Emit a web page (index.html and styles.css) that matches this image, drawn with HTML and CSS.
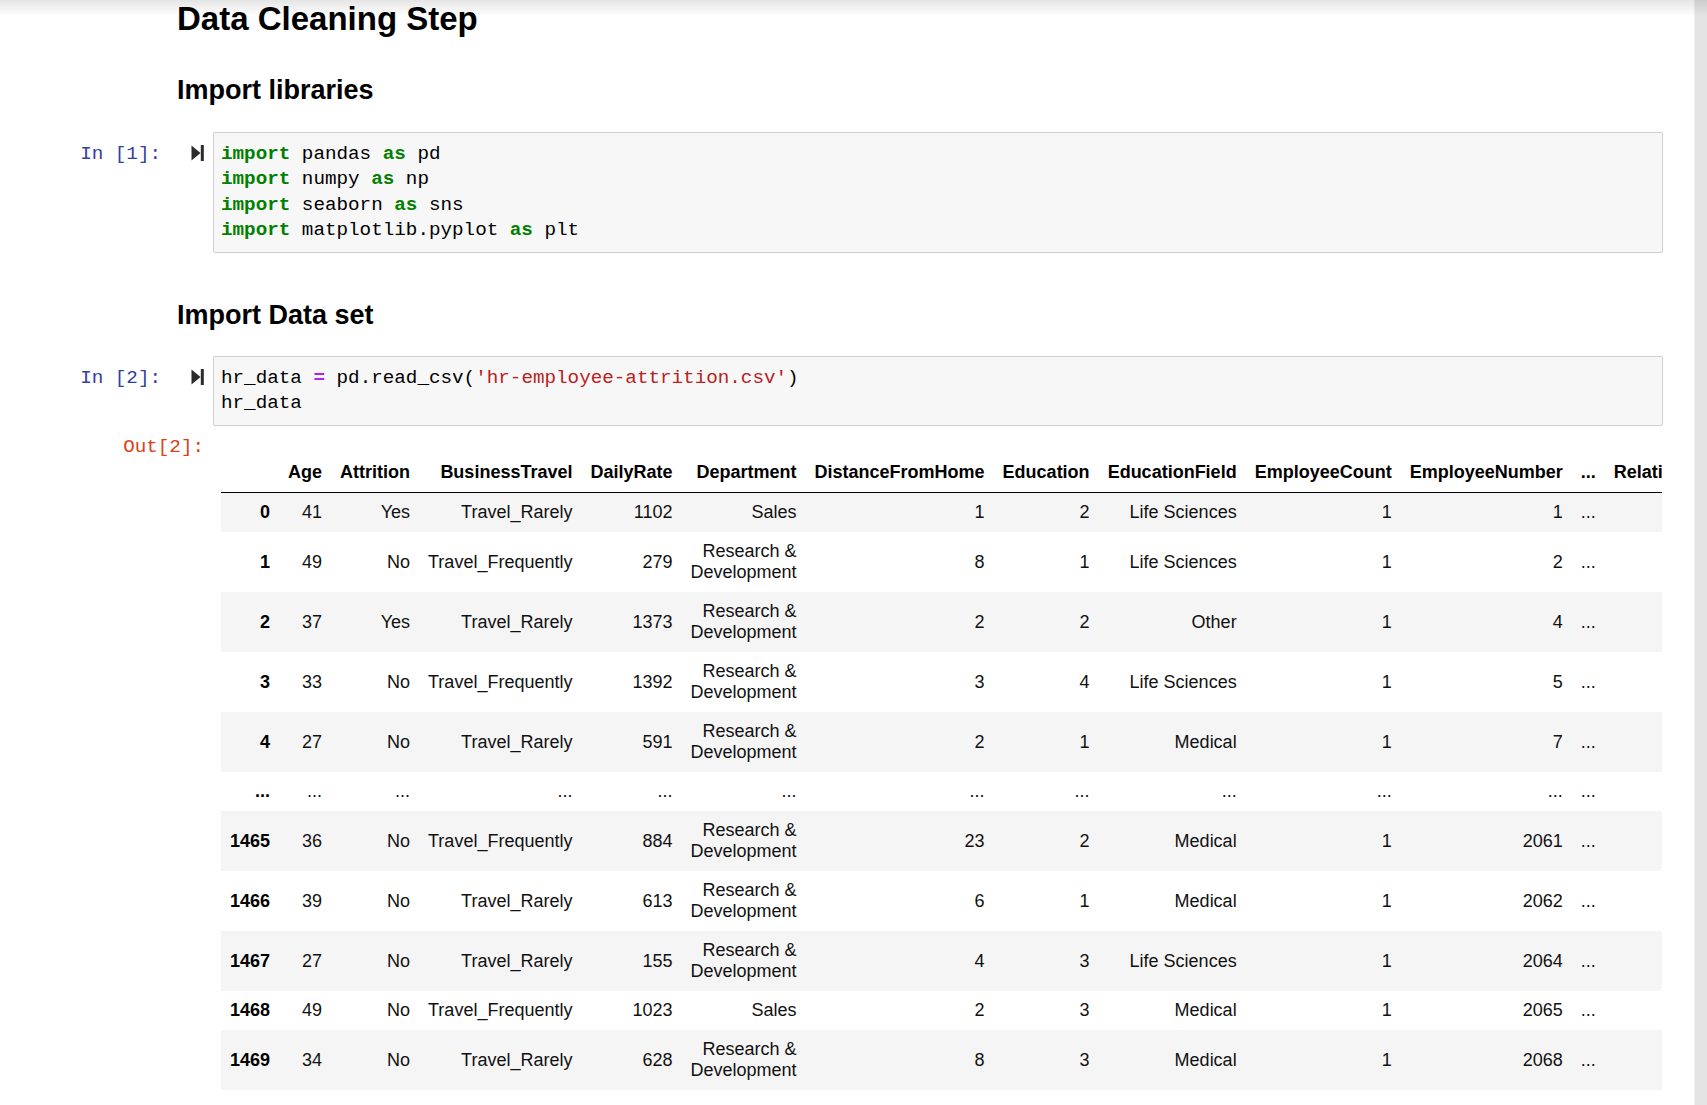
FILE: index.html
```html
<!DOCTYPE html>
<html>
<head>
<meta charset="utf-8">
<link rel="stylesheet" href="styles.css">
</head>
<body>
<div class="page">
  <div class="notebook">
    <h2 class="h-main">Data Cleaning Step</h2>
    <h3 class="h-sub first">Import libraries</h3>

    <div class="cell cell1">
      <div class="prompt in-prompt">
        <span class="prompt-text">In [1]:</span>
        <svg class="run-icon" width="13" height="16" viewBox="0 0 13 16"><path d="M0.5 0.5 L9.5 8 L0.5 15.5 Z" fill="#2b2b2b"/><rect x="9.8" y="0" width="3" height="16" fill="#2b2b2b"/></svg>
      </div>
      <div class="input-box">
        <div class="code">
          <div class="line"><span class="kw">import</span> pandas <span class="kw">as</span> pd</div>
          <div class="line"><span class="kw">import</span> numpy <span class="kw">as</span> np</div>
          <div class="line"><span class="kw">import</span> seaborn <span class="kw">as</span> sns</div>
          <div class="line"><span class="kw">import</span> matplotlib.pyplot <span class="kw">as</span> plt</div>
        </div>
      </div>
    </div>

    <h3 class="h-sub second">Import Data set</h3>

    <div class="cell cell2">
      <div class="prompt in-prompt">
        <span class="prompt-text">In [2]:</span>
        <svg class="run-icon" width="13" height="16" viewBox="0 0 13 16"><path d="M0.5 0.5 L9.5 8 L0.5 15.5 Z" fill="#2b2b2b"/><rect x="9.8" y="0" width="3" height="16" fill="#2b2b2b"/></svg>
      </div>
      <div class="input-box">
        <div class="code">
          <div class="line">hr_data <span class="op">=</span> pd.read_csv(<span class="str">'hr-employee-attrition.csv'</span>)</div>
          <div class="line">hr_data</div>
        </div>
      </div>
    </div>

    <div class="cell output">
      <div class="prompt out-prompt"><span class="prompt-text">Out[2]:</span></div>
      <div class="output-area">
        <table class="dataframe">
          <thead>
            <tr><th></th><th>Age</th><th>Attrition</th><th>BusinessTravel</th><th>DailyRate</th><th>Department</th><th>DistanceFromHome</th><th>Education</th><th>EducationField</th><th>EmployeeCount</th><th>EmployeeNumber</th><th>...</th><th>RelationshipSatisfaction</th><th>StandardHours</th><th>StockOptionLevel</th></tr>
          </thead>
          <tbody>
            <tr><th>0</th><td>41</td><td>Yes</td><td>Travel_Rarely</td><td>1102</td><td>Sales</td><td>1</td><td>2</td><td>Life Sciences</td><td>1</td><td>1</td><td>...</td><td>1</td><td>80</td><td>0</td></tr>
            <tr><th>1</th><td>49</td><td>No</td><td>Travel_Frequently</td><td>279</td><td>Research &amp; Development</td><td>8</td><td>1</td><td>Life Sciences</td><td>1</td><td>2</td><td>...</td><td>4</td><td>80</td><td>1</td></tr>
            <tr><th>2</th><td>37</td><td>Yes</td><td>Travel_Rarely</td><td>1373</td><td>Research &amp; Development</td><td>2</td><td>2</td><td>Other</td><td>1</td><td>4</td><td>...</td><td>2</td><td>80</td><td>0</td></tr>
            <tr><th>3</th><td>33</td><td>No</td><td>Travel_Frequently</td><td>1392</td><td>Research &amp; Development</td><td>3</td><td>4</td><td>Life Sciences</td><td>1</td><td>5</td><td>...</td><td>3</td><td>80</td><td>0</td></tr>
            <tr><th>4</th><td>27</td><td>No</td><td>Travel_Rarely</td><td>591</td><td>Research &amp; Development</td><td>2</td><td>1</td><td>Medical</td><td>1</td><td>7</td><td>...</td><td>4</td><td>80</td><td>1</td></tr>
            <tr><th>...</th><td>...</td><td>...</td><td>...</td><td>...</td><td>...</td><td>...</td><td>...</td><td>...</td><td>...</td><td>...</td><td>...</td><td>...</td><td>...</td><td>...</td></tr>
            <tr><th>1465</th><td>36</td><td>No</td><td>Travel_Frequently</td><td>884</td><td>Research &amp; Development</td><td>23</td><td>2</td><td>Medical</td><td>1</td><td>2061</td><td>...</td><td>3</td><td>80</td><td>1</td></tr>
            <tr><th>1466</th><td>39</td><td>No</td><td>Travel_Rarely</td><td>613</td><td>Research &amp; Development</td><td>6</td><td>1</td><td>Medical</td><td>1</td><td>2062</td><td>...</td><td>1</td><td>80</td><td>1</td></tr>
            <tr><th>1467</th><td>27</td><td>No</td><td>Travel_Rarely</td><td>155</td><td>Research &amp; Development</td><td>4</td><td>3</td><td>Life Sciences</td><td>1</td><td>2064</td><td>...</td><td>2</td><td>80</td><td>1</td></tr>
            <tr><th>1468</th><td>49</td><td>No</td><td>Travel_Frequently</td><td>1023</td><td>Sales</td><td>2</td><td>3</td><td>Medical</td><td>1</td><td>2065</td><td>...</td><td>4</td><td>80</td><td>0</td></tr>
            <tr><th>1469</th><td>34</td><td>No</td><td>Travel_Rarely</td><td>628</td><td>Research &amp; Development</td><td>8</td><td>3</td><td>Medical</td><td>1</td><td>2068</td><td>...</td><td>1</td><td>80</td><td>0</td></tr>
          </tbody>
        </table>
      </div>
    </div>
  </div>
  <div class="scrollbar"></div>
</div>
<div class="topshade"></div>
</body>
</html>
```

FILE: styles.css
```css
html, body {
  margin: 0;
  padding: 0;
  background: #fff;
  overflow: hidden;
}

body {
  font-family: "Liberation Sans", Arial, sans-serif;
  color: #000;
  width: 1707px;
  height: 1105px;
}

.page {
  display: flex;
  height: 1105px;
}

.notebook {
  width: 1694px;
  flex: none;
  height: 1105px;
  overflow: hidden;
  padding-top: 1px;
  box-sizing: border-box;
}

.scrollbar {
  flex: 1;
  background: #e4e4e4;
  border-left: 1px solid #eeeeee;
}

.topshade {
  position: fixed;
  left: 0;
  top: 0;
  width: 1707px;
  height: 16px;
  background: linear-gradient(to bottom, rgba(0,0,0,0.10), rgba(0,0,0,0));
  pointer-events: none;
}

.h-main {
  margin: 0 0 0 177px;
  font-size: 33px;
  line-height: 36px;
  font-weight: bold;
}

.h-sub {
  margin: 0 0 0 177px;
  font-size: 27px;
  line-height: 31px;
  font-weight: bold;
}

.h-sub.first {
  margin-top: 38px;
}

.h-sub.second {
  margin-top: 46.7px;
}

.cell {
  display: flex;
  align-items: flex-start;
}

.cell1 {
  margin-top: 26.4px;
}

.cell2 {
  margin-top: 25.5px;
}

.prompt {
  width: 213px;
  flex: none;
  box-sizing: border-box;
  display: flex;
  justify-content: flex-end;
  align-items: flex-start;
  font-family: "Liberation Mono", "DejaVu Sans Mono", monospace;
  font-size: 19.25px;
  line-height: 25.5px;
}

.in-prompt {
  padding-top: 9.4px;
  padding-right: 9px;
  color: #303F9F;
}

.in-prompt .prompt-text {
  margin-right: 30px;
}

.run-icon {
  margin-top: 3.5px;
  display: block;
}

.out-prompt {
  padding-top: 8.6px;
  padding-right: 9px;
  color: #D84315;
}

.input-box {
  width: 1450px;
  flex: none;
  box-sizing: border-box;
  background: #f7f7f7;
  border: 1px solid #cfcfcf;
  border-radius: 2px;
  padding: 8.4px 0;
}

.code {
  padding: 0 7px;
  font-family: "Liberation Mono", "DejaVu Sans Mono", monospace;
  font-size: 19.25px;
  line-height: 25.5px;
  color: #000;
}

.line {
  white-space: pre;
  height: 25.5px;
}

.kw {
  color: #008000;
  font-weight: bold;
}

.op {
  color: #AA22FF;
  font-weight: bold;
}

.str {
  color: #BA2121;
}

.output-area {
  width: 1441px;
  flex: none;
  margin-left: 8px;
  overflow: hidden;
  padding-top: 27px;
}

.dataframe {
  border-collapse: collapse;
  border-spacing: 0;
  border: none;
  font-size: 18px;
  color: #111;
}

.dataframe thead {
  border-bottom: 1px solid #000;
  vertical-align: bottom;
}

.dataframe th,
.dataframe td {
  text-align: right;
  vertical-align: middle;
  padding: 9px;
  line-height: 21px;
  border: none;
}

.dataframe thead th {
  vertical-align: bottom;
}

.dataframe th {
  font-weight: bold;
  color: #000;
}

.dataframe td {
  font-weight: normal;
}

.dataframe tbody tr:nth-child(odd) {
  background: #f5f5f5;
}
```
